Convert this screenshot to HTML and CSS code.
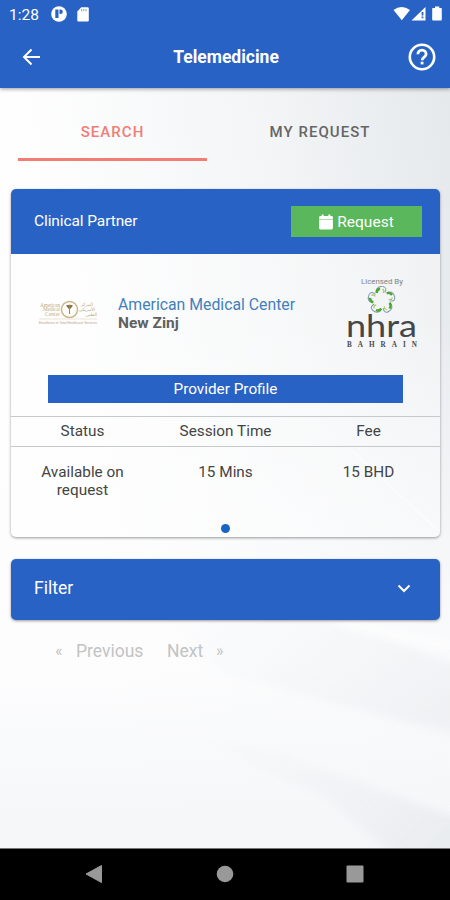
FILE: index.html
```html
<!DOCTYPE html>
<html lang="en">
<head>
<meta charset="utf-8">
<title>Telemedicine</title>
<link rel="stylesheet" href="styles.css">
</head>
<body>
<div class="screen">
  <header class="top">
    <div class="status">
      <span class="clock">1:28</span>
      <svg class="app-ico" width="16" height="16" viewBox="0 0 16 16"><circle cx="8" cy="8" r="7.8" fill="#fff"/><path d="M4.300 3.500h3.200v8.500H4.300zM8.500 3.500h1a2.300 2.300 0 0 1 0 4.600h-1z" fill="#2962c5"/></svg>
      <svg class="sd-ico" width="12" height="15" viewBox="0 0 12 15"><path d="M4.3.3h6.2q1.3 0 1.3 1.2v11.8q0 1.3-1.3 1.3h-9Q.3 14.600.3 13.300V4.500z" fill="#fff"/><path d="M4.600 2v2.300M6.800 2v2.300M9 2v2.300" stroke="#2962c5" stroke-opacity=".6"/></svg>
      <svg class="sys" width="50" height="16" viewBox="0 0 50 16"><path d="M.5 4Q8.500-2 17 4L8.800 14.300z" fill="#fff"/><path d="M18.500 14.500 32.500 1v13.500z" fill="#fff"/><path d="M29.500 6v3.500M29.500 10.500v1.800" stroke="#2962c5" stroke-width="1.800"/><path d="M40 2h2V.5h4.300V2H48q.8 0 .8.800v11q0 .8-.8.800h-8q-.8 0-.8-.8v-11Q39.200 2 40 2z" fill="#fff"/></svg>
    </div>
    <div class="bar">
      <svg class="back" width="20" height="18" viewBox="0 0 20 18"><path d="M10.500 1.500 3 9l7.500 7.500M3 9h16" fill="none" stroke="#fff" stroke-width="2"/></svg>
      <h1>Telemedicine</h1>
      <svg class="help" width="28" height="28" viewBox="0 0 28 28"><circle cx="14" cy="14" r="12.200" fill="none" stroke="#fff" stroke-width="2.600"/><path d="M9.900 11.200a4.100 4.100 0 0 1 8.200 0c0 2.800-4 2.900-4 6" fill="none" stroke="#fff" stroke-width="2.800"/><path d="M12.700 18.700h2.800v2.700h-2.800z" fill="#fff"/></svg>
    </div>
  </header>

  <main class="content">
    <svg class="backdrop" viewBox="0 0 450 761" preserveAspectRatio="none">
      <defs>
        <linearGradient id="sky" x1="0" y1=".25" x2="1" y2="0"><stop offset=".1" stop-color="#fefefe"/><stop offset=".6" stop-color="#f3f5f6"/><stop offset="1" stop-color="#e5e9ec"/></linearGradient>
        <linearGradient id="fade" x1="0" y1="0" x2="0" y2="1"><stop offset=".3" stop-color="#fdfdfe" stop-opacity="0"/><stop offset=".72" stop-color="#fdfdfe" stop-opacity=".8"/></linearGradient>
        <linearGradient id="ray" x1="0" y1="0" x2="1" y2=".5"><stop offset="0" stop-color="#f1f3f5" stop-opacity="0"/><stop offset="1" stop-color="#e9ecef"/></linearGradient>
        <linearGradient id="floor" x1="0" y1="0" x2="0" y2="1"><stop offset="0" stop-color="#f5f6f8" stop-opacity="0"/><stop offset="1" stop-color="#f4f6f8"/></linearGradient>
        <filter id="soft"><feGaussianBlur stdDeviation="4"/></filter>
      </defs>
      <path d="M0 0h450v761H0z" fill="url(#sky)"/>
      <path d="M0 0h450v761H0z" fill="url(#fade)"/>
      <path d="M0 570h450v191H0z" fill="url(#floor)"/>
      <path d="M150 520 340 535 470 582V650L340 618 225 585z" fill="url(#ray)" opacity=".55" filter="url(#soft)"/>
      <path d="M180 640 290 671 380 703 470 735V790H420L325 710 250 677z" fill="url(#ray)" opacity=".85" filter="url(#soft)"/>
      <path d="M335 535 450 560" fill="none" stroke="#fff" stroke-opacity=".5" stroke-width="8" filter="url(#soft)"/>
      <path d="M350 361 438 443" fill="none" stroke="#fff" stroke-opacity=".5" stroke-width="1.500"/>
    </svg>

    <nav class="tabs">
      <span class="tab on">SEARCH</span>
      <span class="tab">MY REQUEST</span>
    </nav>

    <section class="card">
      <div class="card-head">
        <h2>Clinical Partner</h2>
        <button class="request"><svg width="14" height="16" viewBox="0 0 14 16"><path d="M2.600.4h2v1.700h4.800V.4h2v1.700h1.200q1.300 0 1.300 1.300V5H.1V3.400Q.1 2.100 1.400 2.100h1.200zM.1 5.600h13.800v8.400q0 1.400-1.300 1.400H1.400Q.1 15.400.1 14z" fill="#fff"/></svg><span>Request</span></button>
      </div>
      <div class="provider">
        <svg class="amc" width="60" height="26" viewBox="0 0 60 26">
          <g font-family="Liberation Serif" font-size="5.200" fill="#c0ab7b">
            <text x="1" y="6.500" textLength="20">American</text><text x="4" y="11" textLength="17">Medical</text><text x="6" y="15.500" textLength="15">Center</text>
            <g font-family="DejaVu Sans" font-size="4.500" text-anchor="end"><text x="54" y="6">المركز</text><text x="56" y="11">الأمريكي</text><text x="58" y="15.500">الطبي</text></g>
          </g>
          <circle cx="30.500" cy="9.500" r="8" fill="#fffefa" stroke="#c8b68c" stroke-width="1.500"/>
          <path d="M27 5.500q3.500-1.600 7 0l-2.500 3.200h-2z" fill="#877246"/><path d="M30.500 5v9" stroke="#9b8657"/>
          <path d="M0 19h58" stroke="#ded3b9" stroke-width=".6"/>
          <text x="0" y="23.500" textLength="58" lengthAdjust="spacingAndGlyphs" font-family="Liberation Sans" font-size="3.400" fill="#c59b7d">Excellence in Total Healthcare Services</text>
        </svg>
        <div class="names"><span class="name">American Medical Center</span><span class="place">New Zinj</span></div>
        <svg class="nhra" width="76" height="76" viewBox="0 0 76 76">
          <text x="14" y="8" textLength="42" lengthAdjust="spacingAndGlyphs" font-family="Roboto" font-size="7.500" fill="#818385">Licensed By</text>
          <g transform="translate(34.500 24)" fill="none">
            <g id="petal"><path d="M-5.500-8.500Q-5-14 1-13.500 6-13 3.500-7.500" stroke="#7d9ba9" stroke-width="1"/><path d="M-4.800-7Q-5-10.500-1.500-11.500" stroke="#4ba52e" stroke-width="2.400"/><path d="M1-11Q3.500-9.500 1.500-7" stroke="#a5c95a" stroke-width="1.200"/></g>
            <use href="#petal" transform="rotate(72)"/><use href="#petal" transform="rotate(144)"/><use href="#petal" transform="rotate(216)"/><use href="#petal" transform="rotate(288)"/>
          </g>
          <text x="-1" y="60.500" textLength="71" lengthAdjust="spacingAndGlyphs" font-family="Lato" font-size="31" fill="#45464a">nhra</text>
          <text x="0" y="71.300" textLength="70" font-family="Liberation Serif" font-weight="700" font-size="7.200" fill="#4b4b4e">BAHRAIN</text>
        </svg>
      </div>
      <button class="profile">Provider Profile</button>
      <div class="row labels"><span>Status</span><span>Session Time</span><span>Fee</span></div>
      <div class="row values"><span>Available on<br>request</span><span>15 Mins</span><span>15 BHD</span></div>
      <i class="dot"></i>
    </section>

    <section class="filter"><span>Filter</span><svg width="14" height="9" viewBox="0 0 14 9"><path d="M1.500 1.500 7 7l5.500-5.500" fill="none" stroke="#fff" stroke-width="2"/></svg></section>

    <div class="pager"><span class="mark">«</span><span class="prev">Previous</span><span class="next">Next</span><span class="mark">»</span></div>
  </main>

  <footer class="android">
    <svg width="18" height="20" viewBox="0 0 18 20"><path d="M1 10 16.500 1.500v17z" fill="#999" stroke="#999"/></svg>
    <svg width="18" height="18" viewBox="0 0 18 18"><circle cx="9" cy="9" r="8.300" fill="#999"/></svg>
    <svg width="18" height="18" viewBox="0 0 18 18"><rect x=".5" y=".5" width="17" height="17" rx="1" fill="#999"/></svg>
  </footer>
</div>
</body>
</html>
```
FILE: styles.css
```css
* { box-sizing: border-box; }
body { margin: 0; font-family: Roboto, "Liberation Sans", sans-serif; color: #444; }
svg { display: block; flex: none; }
h1, h2 { margin: 0; }
button { border: 0; padding: 0; font: inherit; color: #fff; }
.screen { width: 450px; height: 900px; display: flex; flex-direction: column; overflow: hidden; }
.top { position: relative; z-index: 1; height: 88px; flex: none; background: #2962c5; color: #fff; box-shadow: 0 1px 4px rgba(0,0,0,.4); }
.status { height: 28px; display: flex; align-items: center; padding: 0 7px 0 9px; }
.clock { width: 42px; padding-top: 1px; font-size: 15.500px; }
.sd-ico { margin-left: 10px; }
.sys { margin-left: auto; }
.bar { height: 58px; display: grid; grid-template-columns: 60px 1fr 60px; align-items: center; }
.back { margin-left: 21px; }
.help { margin-left: 18px; }
.bar h1 { text-align: center; font-size: 17.500px; line-height: 20px; font-weight: 700; padding-left: 2px; }
.content { position: relative; flex: 1; padding: 0 10px 0 11px; background: #fdfdfd; }
.content > :not(.backdrop) { position: relative; }
.backdrop { position: absolute; inset: 0; width: 100%; height: 100%; }
.tabs { height: 73px; margin-left: 7px; padding-top: 15px; display: grid; grid-template-columns: 189px 1fr; }
.tab { display: flex; align-items: center; justify-content: center; height: 58px; font-size: 15px; font-weight: 500; letter-spacing: 1.050px; color: #666; padding-right: 7px; }
.tab.on { color: #f17d75; border-bottom: 3px solid #f17d75; padding: 3px 0 0; }
.card { height: 348px; margin-top: 28px; border-radius: 5px; display: flex; flex-direction: column; background: rgba(255,255,255,.35); box-shadow: 0 1px 3px rgba(0,0,0,.4); overflow: hidden; }
.card-head { height: 65px; background: #2962c5; color: #fff; display: flex; align-items: center; justify-content: space-between; padding: 0 18px 0 23px; }
.card-head h2 { font-size: 15.500px; font-weight: 400; letter-spacing: -.1px; padding-bottom: 2px; }
.request { width: 131px; height: 31px; background: #5ab75b; display: flex; align-items: center; justify-content: center; gap: 4px; font-size: 15.500px; }
.provider { height: 121px; display: flex; align-items: flex-start; }
.amc { margin: 46px 0 0 28px; overflow: visible; }
.names { margin: 41px 0 0 19px; width: 217px; display: flex; flex-direction: column; font-size: 15.800px; line-height: 19px; }
.name { color: #4380bb; white-space: nowrap; }
.place { color: #606060; font-weight: 700; font-size: 15.500px; }
.nhra { margin: 22px 0 0 12px; overflow: visible; }
.profile { width: 355px; height: 28px; margin-left: 37px; background: #2962c5; font-size: 15.300px; }
.row { display: grid; grid-template-columns: 1fr 1fr 1fr; text-align: center; font-size: 15.300px; line-height: 18px; letter-spacing: .01px; }
.labels { margin-top: 13px; height: 31px; border-top: 1px solid #c8c9ca; border-bottom: 1px solid #c8c9ca; align-items: center; }
.labels span { padding-bottom: 1px; }
.values { height: 77px; padding-top: 16px; }
.dot { width: 9px; height: 9px; border-radius: 50%; background: #1964c0; align-self: center; }
.filter { margin-top: 22px; height: 61px; background: #2962c5; border-radius: 5px; box-shadow: 0 1px 3px rgba(0,0,0,.4); color: #fff; display: flex; align-items: center; justify-content: space-between; padding: 0 29px 3px 23px; font-size: 17.500px; }
.pager { display: flex; margin: 20px 0 0 44px; font-size: 17.500px; line-height: 22px; color: #c2c3c4; }
.mark { width: 21px; font-size: 16px; }
.prev { width: 91px; }
.next { width: 49px; }
.android { height: 52px; flex: none; background: #000; border-top: 1px solid #777; display: flex; align-items: center; justify-content: space-between; padding: 0 86px 2px 85px; }
```
